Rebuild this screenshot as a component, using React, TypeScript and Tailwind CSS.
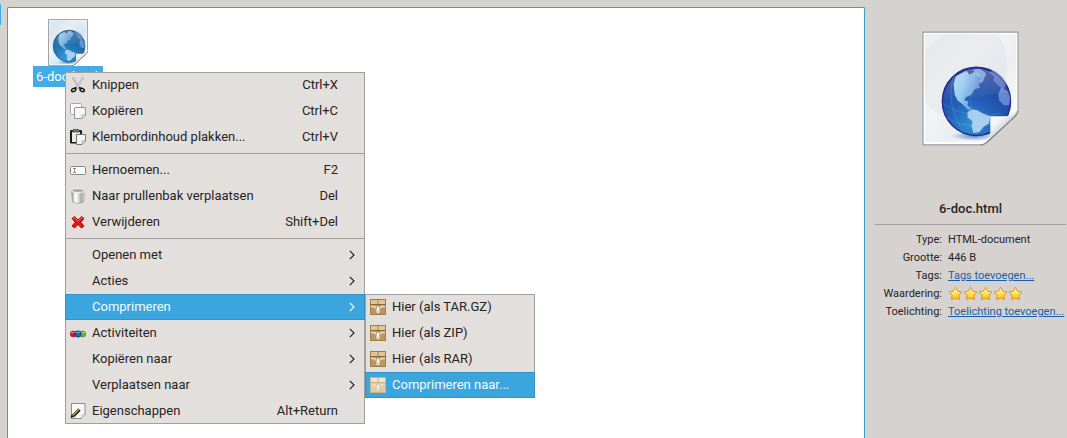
import { useId } from "react";
import type { ReactNode } from "react";

type Item = {
  label: string;
  shortcut?: string;
  icon?: ReactNode;
  submenu?: boolean;
  active?: boolean;
};

function HtmlFileIcon({ className, small }: { className: string; small?: boolean }) {
  const id = useId();
  const tint = small ? "#d0e9f6" : "#eceef1";
  const sea = small ? "#1f78b6" : "#2360b8";
  const mid = small ? "#1d659f" : "#2246a2";
  const deep = small ? "#17507f" : "#262a88";
  const land = small ? "#93c8e8" : "#a5ddf8";
  return (
    <svg viewBox="0 0 98 116" className={className} aria-hidden="true">
      <defs>
        <linearGradient id={`${id}page`} x1="0" y1="0" x2="1" y2="1">
          <stop offset="0" stopColor={tint} />
          <stop offset="0.35" stopColor="#f3f4f6" />
          <stop offset="0.6" stopColor={tint} />
          <stop offset="1" stopColor="#fff" />
        </linearGradient>
        <radialGradient id={`${id}sea`} cx="0.42" cy="0.85" r="0.9">
          <stop offset="0" stopColor={small ? "#3d9dd4" : "#2f8fd0"} />
          <stop offset="0.4" stopColor={sea} />
          <stop offset="0.75" stopColor={mid} />
          <stop offset="1" stopColor={deep} />
        </radialGradient>
        <linearGradient id={`${id}land`} x1="0" y1="0" x2="1" y2="0.3">
          <stop offset="0" stopColor={land} />
          <stop offset="0.4" stopColor={land} stopOpacity="0.85" />
          <stop offset="1" stopColor="#6c9fe6" stopOpacity="0.7" />
        </linearGradient>
        <linearGradient id={`${id}shine`} x1="0" y1="0" x2="0" y2="1">
          <stop offset="0" stopColor="#fff" stopOpacity="0.25" />
          <stop offset="1" stopColor="#fff" stopOpacity="0" />
        </linearGradient>
        <linearGradient id={`${id}fold`} x1="0.15" y1="0.1" x2="0.6" y2="0.6">
          <stop offset="0" stopColor="#fff" />
          <stop offset="0.6" stopColor="#f4f4f5" />
          <stop offset="1" stopColor="#d2d3d6" />
        </linearGradient>
        <radialGradient id={`${id}glow`}>
          <stop offset="0" stopColor="#3d6fc0" stopOpacity="0.8" />
          <stop offset="1" stopColor="#3d6fc0" stopOpacity="0" />
        </radialGradient>
        <clipPath id={`${id}clip`}>
          <path d="M1 1H97V80L61 114H1Z" />
        </clipPath>
      </defs>
      <path d="M1 1H97V80Q97 83 94 86L66 112Q63 115 59 115H1Z" fill="#fff" stroke="#9b9b9d" strokeWidth={small ? 2.4 : 1.2} />
      <path d="M3 3H95V80L61 112H3Z" fill={`url(#${id}page)`} />
      <path d="M3 22Q12 8 22 3H76Q92 26 82 54L60 74 20 84Q8 80 3 72Z" fill="#cdd5dc" opacity="0.22" />
      <g clipPath={`url(#${id}clip)`}>
        <g transform={small ? "translate(-11 -14) scale(1.14)" : undefined}>
          <ellipse cx="53" cy="106" rx="24" ry="5" fill={`url(#${id}glow)`} />
          <circle cx="55" cy="71" r="34.5" fill={`url(#${id}sea)`} stroke={deep} strokeWidth="1.4" />
          <path d="M34 46L39 43 45 40 48 44 53 41 59 43 57 48 62 51 57 54 59 57 53 59 50 64 44 67 43 70 47 71 46 75 50 78 47 80 41 74 36 70 33 64 32 54Z" fill={`url(#${id}land)`} />
          <path d="M51 39L59 38 65 43 61 52 58 48 55 43Z" fill="#8cbdf0" opacity="0.7" />
          <path d="M67 41L74 40 82 47 85 54 82 59 77 55 72 50 73 46Z" fill="#789de2" opacity="0.55" />
          <path d="M80 57L87 61 89 68 88 75 83 75 78 70 77 64Z" fill="#7fa3e7" opacity="0.7" />
          <path d="M46 82L50 79 56 80 61 83 69 86 68 93 62 97 58 102 52 103 50 96 51 91 46 87Z" fill="#b8d8f5" opacity="0.9" />
          <path d="M21 73Q46 91 80 83M24 87Q48 101 72 94M33 43Q22 73 43 103M55 37Q43 70 55 105" fill="none" stroke="#84bfef" strokeWidth="0.6" opacity="0.4" />
          <path d="M55 38A33 33 0 0 0 22 71Q52 67 87 62A33 33 0 0 0 55 38Z" fill={`url(#${id}shine)`} />
        </g>
      </g>
      <path d="M69 86H84Q92 86 97 78V81Q97 83 94 86L66 112Q63 115 59 115Q69 112 69 103Z" fill={`url(#${id}fold)`} />
      <path d="M97 80Q97 83 94 86L66 112Q63 115 59 115" fill="none" stroke="#85868a" strokeWidth={small ? 2.4 : 1.2} />
    </svg>
  );
}

function CutIcon() {
  return (
    <svg viewBox="0 0 16 16" className="size-4" aria-hidden="true">
      <path d="M2.3 0.8L3.6 0.6 9.8 11 8.5 11.5Z" fill="#eee" stroke="#999" strokeWidth="0.7" />
      <path d="M13.5 0.8L12.2 0.6 6.2 11 7.5 11.5Z" fill="#fafafa" stroke="#999" strokeWidth="0.7" />
      <path d="M6.5 10.5L4.5 11.5M9 10.5L11.5 11.5" stroke="#222" strokeWidth="1.5" />
      <ellipse cx="3.6" cy="13" rx="2.2" ry="1.5" fill="none" stroke="#111" strokeWidth="1.5" transform="rotate(-25 3.6 13)" />
      <ellipse cx="12.2" cy="13" rx="2.2" ry="1.5" fill="none" stroke="#111" strokeWidth="1.5" transform="rotate(25 12.2 13)" />
    </svg>
  );
}

function CopyIcon() {
  return (
    <svg viewBox="0 0 16 16" className="size-4" aria-hidden="true">
      <rect x="0.5" y="0.5" width="11" height="11" rx="1" fill="#f9f9f9" stroke="#a8a8a8" />
      <path d="M5 4.5H15.5V12L12 15.5H5Q4.5 15.5 4.5 15V5Z" fill="#f6f6f6" stroke="#949494" />
      <path d="M12 15.5V12H15.5Z" fill="#fff" stroke="#999" strokeWidth="0.8" />
    </svg>
  );
}

function PasteIcon() {
  return (
    <svg viewBox="0 0 16 16" className="size-4" aria-hidden="true">
      <rect x="0" y="1" width="12" height="13.5" rx="1.2" fill="#1c1c1c" />
      <rect x="2" y="3" width="8" height="10" fill="#e8e8e8" />
      <path d="M2.5 3V1.5L4 0H8L9.5 1.5V3Z" fill="#777" stroke="#222" strokeWidth="0.6" />
      <path d="M6.5 5.5H15.5V12L12 15.5H6.5Z" fill="#f4f4f4" stroke="#757575" />
      <path d="M12 15.5V12H15.5Z" fill="#fff" stroke="#999" strokeWidth="0.8" />
    </svg>
  );
}

function RenameIcon() {
  return (
    <svg viewBox="0 0 16 16" className="size-4" aria-hidden="true">
      <rect x="0.5" y="4.5" width="15" height="8" rx="1" fill="#fafafa" stroke="#8a8a8a" />
      <path d="M3 6.5H6M3 10.5H6M4.5 6.5V10.5" stroke="#777" strokeWidth="0.8" />
    </svg>
  );
}

function TrashIcon() {
  const id = useId();
  return (
    <svg viewBox="0 0 16 16" className="size-4" aria-hidden="true">
      <linearGradient id={id}>
        <stop offset="0" stopColor="#8f9293" />
        <stop offset="0.3" stopColor="#fff" />
        <stop offset="0.55" stopColor="#dadddd" />
        <stop offset="0.75" stopColor="#a4a7a7" />
        <stop offset="1" stopColor="#e0e2e2" />
      </linearGradient>
      <path d="M1.5 2.5L2.5 14Q8 17 13.5 14L14.5 2.5Z" fill={`url(#${id})`} stroke="#929595" strokeWidth="0.6" />
      <ellipse cx="8" cy="2.5" rx="6.8" ry="2" fill="#a9acac" stroke="#f5f5f5" strokeWidth="1" />
    </svg>
  );
}

function DeleteIcon() {
  return (
    <svg viewBox="0 0 16 16" className="size-4" aria-hidden="true">
      <path d="M2 4.5L4.5 2.5 8 6 11.5 2.5 14 4.5 10.8 8.2 14 12 11.5 14 8 10.5 4.5 14 2 12 5.2 8.2Z" fill="#df1717" stroke="#a50d0d" strokeWidth="1" strokeLinejoin="round" />
      <path d="M3.2 4.6L4.5 3.6 8 7.2 11.5 3.6 12.8 4.6" fill="none" stroke="#f57d74" strokeWidth="0.9" />
    </svg>
  );
}

function ActivitiesIcon() {
  return (
    <svg viewBox="0 0 16 16" className="size-4" aria-hidden="true">
      <circle cx="3.2" cy="9" r="3" fill="#d51d1d" stroke="#6d1010" strokeWidth="0.5" />
      <circle cx="12.8" cy="9" r="3" fill="#6cb51c" stroke="#336012" strokeWidth="0.5" />
      <circle cx="8" cy="9" r="3.2" fill="#1768ca" stroke="#102d62" strokeWidth="0.7" />
      <path d="M1.5 7.5H4M6.5 7.3H9.5M12 7.5H14.5" stroke="#fff" strokeWidth="1" opacity="0.5" strokeLinecap="round" />
    </svg>
  );
}

function PropertiesIcon() {
  return (
    <svg viewBox="0 0 16 16" className="size-4" aria-hidden="true">
      <path d="M1.5 0.5H15V12L11.5 15.5H1.5Z" fill="#f8f8f8" stroke="#8d8d8d" />
      <path d="M11.5 15.5L12 12H15Z" fill="#fff" stroke="#aaa" strokeWidth="0.8" />
      <path d="M3 13L9.5 6.5" stroke="#1d1d1d" strokeWidth="3.2" />
      <path d="M3 12.2L9 6.2" stroke="#d6ad4b" strokeWidth="1.3" />
      <path d="M0.5 15L1.5 11.5 4 14Z" fill="#1d1d1d" />
    </svg>
  );
}

function ArchiveIcon({ faded }: { faded?: boolean }) {
  return (
    <svg viewBox="0 0 16 16" className="size-4" aria-hidden="true">
      <rect x="0.5" y="0.5" width="15" height="15" fill={faded ? "#e2cba6" : "#bd965b"} stroke={faded ? "#cdb285" : "#a07c47"} />
      <rect x="1" y="1" width="14" height="4.5" fill={faded ? "#f5e4c8" : "#e2c595"} />
      <path d="M0.5 5.5H15.5" stroke={faded ? "#cbb085" : "#8a6737"} />
      <path d="M8 1V5" stroke={faded ? "#cdb285" : "#a58252"} />
      <path d="M1 7.5H4.5L6.5 9.5H9.5L11.5 7.5H15" fill="none" stroke="#ede0c8" strokeWidth="1.4" />
      <path d="M7 7H9L10 12.5Q10 14.5 8 14.5T6 12.5Z" fill="#f8f7f3" stroke={faded ? "#b5a88f" : "#8b8273"} strokeWidth="0.5" />
      <circle cx="8" cy="12.5" r="0.6" fill="#777" />
    </svg>
  );
}

function StarIcon() {
  const id = useId();
  return (
    <svg viewBox="0 0 15 15" className="size-[15px]" aria-hidden="true">
      <linearGradient id={id} x1="0" y1="0" x2="0" y2="1">
        <stop offset="0" stopColor="#fffbd0" />
        <stop offset="0.5" stopColor="#ffe45a" />
        <stop offset="1" stopColor="#f9bd00" />
      </linearGradient>
      <path d="M7.5 1.2L9.6 5.1 13.9 6 10.9 9.2 11.4 13.6 7.5 12 3.6 13.6 4.1 9.2 1.1 6 5.4 5.1Z" fill={`url(#${id})`} stroke="#e2912a" strokeWidth="1" strokeLinejoin="round" />
    </svg>
  );
}

const GROUPS: Item[][] = [
  [
    { label: "Knippen", shortcut: "Ctrl+X", icon: <CutIcon /> },
    { label: "Kopiëren", shortcut: "Ctrl+C", icon: <CopyIcon /> },
    { label: "Klembordinhoud plakken...", shortcut: "Ctrl+V", icon: <PasteIcon /> },
  ],
  [
    { label: "Hernoemen...", shortcut: "F2", icon: <RenameIcon /> },
    { label: "Naar prullenbak verplaatsen", shortcut: "Del", icon: <TrashIcon /> },
    { label: "Verwijderen", shortcut: "Shift+Del", icon: <DeleteIcon /> },
  ],
  [
    { label: "Openen met", submenu: true },
    { label: "Acties", submenu: true },
    { label: "Comprimeren", submenu: true, active: true },
    { label: "Activiteiten", submenu: true, icon: <ActivitiesIcon /> },
    { label: "Kopiëren naar", submenu: true },
    { label: "Verplaatsen naar", submenu: true },
    { label: "Eigenschappen", shortcut: "Alt+Return", icon: <PropertiesIcon /> },
  ],
];

const COMPRESS_ITEMS: Item[] = [
  { label: "Hier (als TAR.GZ)", icon: <ArchiveIcon /> },
  { label: "Hier (als ZIP)", icon: <ArchiveIcon /> },
  { label: "Hier (als RAR)", icon: <ArchiveIcon /> },
  { label: "Comprimeren naar...", icon: <ArchiveIcon faded />, active: true },
];

function MenuItem({ item }: { item: Item }) {
  return (
    <button
      type="button"
      role="menuitem"
      aria-haspopup={item.submenu ? "menu" : undefined}
      className={`flex h-[26px] w-full items-center gap-1.5 pl-[5px] text-left whitespace-nowrap ${
        item.active
          ? "bg-[#3ba6de] text-[#f3fafd] shadow-[inset_0_0_0_1px_#3592c4]"
          : "text-[#26231f]"
      }`}
    >
      <span className="size-4 shrink-0">{item.icon}</span>
      <span className="grow">{item.label}</span>
      {item.shortcut && <span className="mr-[27px]">{item.shortcut}</span>}
      {item.submenu && (
        <svg viewBox="0 0 6 10" className="mr-[10px] h-[10px] w-1.5" fill="none" stroke="currentColor" strokeWidth="1.2" aria-hidden="true">
          <path d="M0.8 0.8L5 5 0.8 9.2" />
        </svg>
      )}
    </button>
  );
}

function ContextMenu() {
  return (
    <div className="absolute top-[72px] left-[65px] flex items-start text-[13px] leading-4">
      <div role="menu" className="w-[300px] bg-[#e3dfdc] shadow-[inset_0_0_0_1px_#a19e9c]">
        {GROUPS.map((group, i) => (
          <div key={i}>
            {i > 0 && <hr className="my-[3px] border-[#a19e9c]" />}
            {group.map((item) => (
              <MenuItem key={item.label} item={item} />
            ))}
          </div>
        ))}
      </div>
      <div role="menu" aria-label="Comprimeren" className="mt-[222px] w-[170px] bg-[#e3dfdc] shadow-[inset_0_0_0_1px_#a19e9c]">
        {COMPRESS_ITEMS.map((item) => (
          <MenuItem key={item.label} item={item} />
        ))}
      </div>
    </div>
  );
}

function DetailRow({ label, children }: { label: string; children: ReactNode }) {
  return (
    <>
      <dt className="text-right">{label}:</dt>
      <dd className="whitespace-nowrap">{children}</dd>
    </>
  );
}

export default function App() {
  return (
    <div className="relative flex min-h-screen overflow-hidden bg-[#d6d2cf] font-[Roboto,'Open_Sans',sans-serif] text-[#26231f]">
      <div className="w-[7px] shrink-0 pt-1">
        <div className="h-[21px] w-px bg-[#3daee9]" />
      </div>

      <main className="mt-[7px] grow rounded-t-xs border border-b-0 border-[#3d9fcd] bg-white">
        <figure className="mt-[11px] ml-[25px] flex w-[70px] flex-col items-center">
          <HtmlFileIcon small className="h-[47px] w-10" />
          <figcaption className="h-[21px] w-full bg-[#43ace8] px-[3px] text-[13px] leading-[21px] whitespace-nowrap text-white">
            6-doc.html
          </figcaption>
        </figure>
      </main>

      <aside className="w-[202px] shrink-0 pt-[31px] pr-px pl-[10px]">
        <HtmlFileIcon className="mx-auto h-[115px] w-[97px]" />
        <h2 className="mt-[53px] pb-[5px] text-center text-[13px] leading-5 font-medium">6-doc.html</h2>
        <hr className="border-[#a5a19e]" />
        <dl className="mt-1.5 grid grid-cols-[67px_1fr] gap-x-1.5 text-[11px] leading-[18px]">
          <DetailRow label="Type">HTML-document</DetailRow>
          <DetailRow label="Grootte">446 B</DetailRow>
          <DetailRow label="Tags">
            <a href="#" className="text-[#175fa9] underline">Tags toevoegen...</a>
          </DetailRow>
          <DetailRow label="Waardering">
            <span className="flex h-4 items-center" role="img" aria-label="5/5">
              {[1, 2, 3, 4, 5].map((n) => (
                <StarIcon key={n} />
              ))}
            </span>
          </DetailRow>
          <DetailRow label="Toelichting">
            <a href="#" className="text-[#175fa9] underline">Toelichting toevoegen...</a>
          </DetailRow>
        </dl>
      </aside>

      <ContextMenu />
    </div>
  );
}
